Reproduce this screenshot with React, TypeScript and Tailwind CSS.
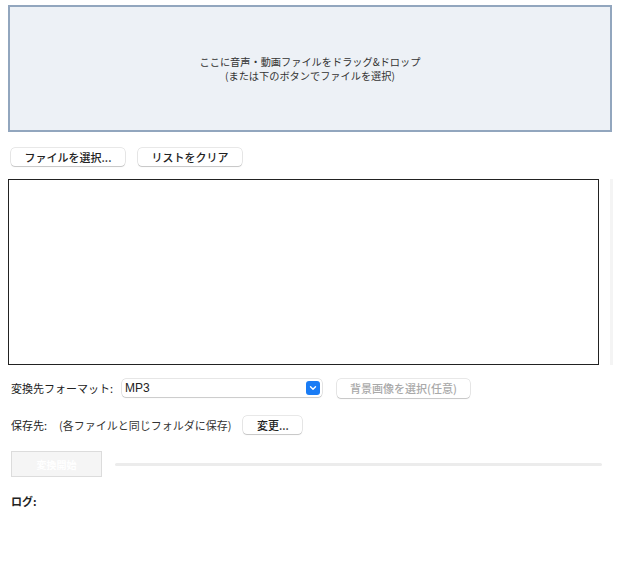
import React from 'react'

const font = { fontFamily: '"Noto Sans CJK JP", "Noto Sans", sans-serif' }

function MacButton({ children, className = '', disabled = false }: { children: React.ReactNode; className?: string; disabled?: boolean }) {
  return (
    <button
      disabled={disabled}
      className={`h-[18px] rounded-[4px] bg-white text-[11px] leading-none font-medium shadow-[0_0_0_0.5px_rgba(0,0,0,0.18),0_1px_1px_rgba(0,0,0,0.15)] flex items-center justify-center ${
        disabled ? 'text-[#a9a9a9]' : 'text-[#222]'
      } ${className}`}
    >
      {children}
    </button>
  )
}

export default function App() {
  return (
    <div className="w-[620px] h-[581px] bg-white text-[#222] overflow-hidden" style={font}>
      {/* Drop zone */}
      <div className="ml-[8px] mt-[5px] w-[604px] h-[127px] border-2 border-[#92a6be] bg-[#edf1f6] flex flex-col items-center justify-center text-[10.2px] text-[#333]">
        <p className="leading-[14px]">ここに音声・動画ファイルをドラッグ&amp;ドロップ</p>
        <p className="leading-[14px]">(または下のボタンでファイルを選択)</p>
      </div>

      {/* File buttons */}
      <div className="flex gap-[13px] ml-[11px] mt-[16px]">
        <MacButton className="w-[114px]">ファイルを選択...</MacButton>
        <MacButton className="w-[104px]">リストをクリア</MacButton>
      </div>

      {/* File list */}
      <div className="flex ml-[8px] mt-[13px] h-[186px]">
        <div className="w-[591px] h-full border border-[#222] bg-white" />
        <div className="ml-[11px] w-[3px] h-full bg-[#f4f4f4]" />
      </div>

      {/* Format */}
      <div className="flex items-center ml-[11px] mt-[13px] h-[20px]">
        <span className="text-[11px] w-[111px]">変換先フォーマット:</span>
        <div className="relative w-[200px] h-[18px] rounded-[4px] bg-white shadow-[0_0_0_0.5px_rgba(0,0,0,0.2),0_1px_1px_rgba(0,0,0,0.12)] flex items-center pl-[3px] text-[12px]" style={{ fontFamily: '"Liberation Sans", Arial, sans-serif' }}>
          MP3
          <span className="absolute right-[2px] top-[2px] w-[14px] h-[14px] rounded-[3px] bg-[#1a7cf5] flex items-center justify-center">
            <svg width="8" height="6" viewBox="0 0 8 6" fill="none">
              <path d="M1.5 1.8 L4 4.3 L6.5 1.8" stroke="white" strokeWidth="1.4" strokeLinecap="round" strokeLinejoin="round" />
            </svg>
          </span>
        </div>
        <MacButton disabled className="ml-[15px] w-[133px] h-[19px]">背景画像を選択(任意)</MacButton>
      </div>

      {/* Save location */}
      <div className="flex items-center ml-[11px] mt-[18px] h-[18px] text-[11px]">
        <span className="w-[48px]">保存先:</span>
        <span className="text-[#333]">(各ファイルと同じフォルダに保存)</span>
        <MacButton className="ml-[12px] w-[59px]">変更...</MacButton>
      </div>

      {/* Start + progress */}
      <div className="flex items-center ml-[11px] mt-[17px]">
        <button
          disabled
          className="w-[91px] h-[26px] border border-[#dcdcdc] bg-[#f5f5f5] text-[10px] font-bold text-white"
        >
          変換開始
        </button>
        <div className="ml-[13px] w-[487px] h-[3px] rounded-full bg-[#ececec]" />
      </div>

      {/* Log */}
      <div className="ml-[11px] mt-[16px] text-[11px] font-bold">ログ:</div>
    </div>
  )
}
